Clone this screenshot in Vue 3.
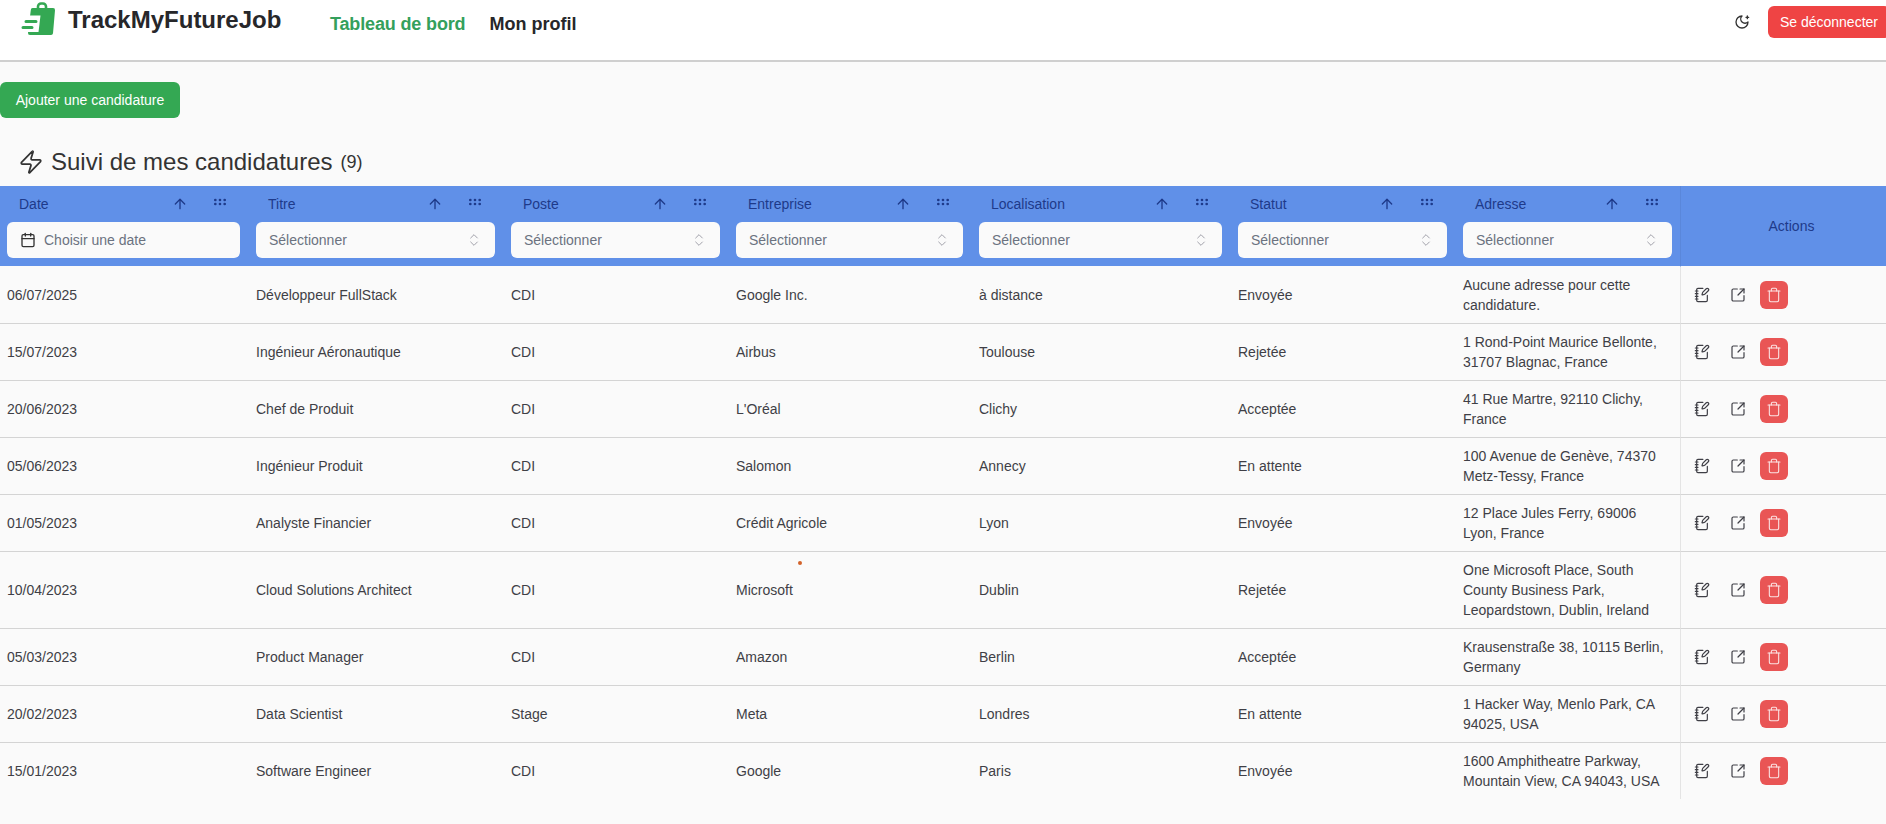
<script setup>
const columns = [
  { key: 'date', label: 'Date', width: 248, date: true },
  { key: 'titre', label: 'Titre', width: 255 },
  { key: 'poste', label: 'Poste', width: 225 },
  { key: 'entreprise', label: 'Entreprise', width: 243 },
  { key: 'localisation', label: 'Localisation', width: 259 },
  { key: 'statut', label: 'Statut', width: 225 },
  { key: 'adresse', label: 'Adresse', width: 225 },
];

const rows = [
  { date: '06/07/2025', titre: 'Développeur FullStack', poste: 'CDI', entreprise: 'Google Inc.', localisation: 'à distance', statut: 'Envoyée', adresse: 'Aucune adresse pour cette candidature.' },
  { date: '15/07/2023', titre: 'Ingénieur Aéronautique', poste: 'CDI', entreprise: 'Airbus', localisation: 'Toulouse', statut: 'Rejetée', adresse: '1 Rond-Point Maurice Bellonte, 31707 Blagnac, France' },
  { date: '20/06/2023', titre: 'Chef de Produit', poste: 'CDI', entreprise: "L'Oréal", localisation: 'Clichy', statut: 'Acceptée', adresse: '41 Rue Martre, 92110 Clichy, France' },
  { date: '05/06/2023', titre: 'Ingénieur Produit', poste: 'CDI', entreprise: 'Salomon', localisation: 'Annecy', statut: 'En attente', adresse: '100 Avenue de Genève, 74370 Metz-Tessy, France' },
  { date: '01/05/2023', titre: 'Analyste Financier', poste: 'CDI', entreprise: 'Crédit Agricole', localisation: 'Lyon', statut: 'Envoyée', adresse: '12 Place Jules Ferry, 69006 Lyon, France' },
  { date: '10/04/2023', titre: 'Cloud Solutions Architect', poste: 'CDI', entreprise: 'Microsoft', localisation: 'Dublin', statut: 'Rejetée', adresse: 'One Microsoft Place, South County Business Park, Leopardstown, Dublin, Ireland' },
  { date: '05/03/2023', titre: 'Product Manager', poste: 'CDI', entreprise: 'Amazon', localisation: 'Berlin', statut: 'Acceptée', adresse: 'Krausenstraße 38, 10115 Berlin, Germany' },
  { date: '20/02/2023', titre: 'Data Scientist', poste: 'Stage', entreprise: 'Meta', localisation: 'Londres', statut: 'En attente', adresse: '1 Hacker Way, Menlo Park, CA 94025, USA' },
  { date: '15/01/2023', titre: 'Software Engineer', poste: 'CDI', entreprise: 'Google', localisation: 'Paris', statut: 'Envoyée', adresse: '1600 Amphitheatre Parkway, Mountain View, CA 94043, USA' },
];
</script>

<template>
  <div class="page">
    <header class="navbar">
      <div class="brand">
        <svg class="logo" viewBox="0 0 36 34" fill="none">
          <path d="M18 7V4.5a3 3 0 0 1 3-3h2a3 3 0 0 1 3 3V7" stroke="#34a853" stroke-width="2.6" />
          <path d="M13 6h20a2 2 0 0 1 2 2.2L33 31.2a2 2 0 0 1-2 1.8H10a2 2 0 0 1-2-2.2L10.800 8a2 2 0 0 1 2.200-2z" fill="#34a853" />
          <path d="M6 13.500h14.500L18.500 30H4z" fill="#fff" />
          <path d="M6 19.500h10M3 25.500h9" stroke="#34a853" stroke-width="3" stroke-linecap="round" />
        </svg>
        <span class="brand-name">TrackMyFutureJob</span>
      </div>
      <nav class="links">
        <a class="link active">Tableau de bord</a>
        <a class="link">Mon profil</a>
      </nav>
      <div class="nav-right">
        <svg class="icon moon" viewBox="0 0 24 24">
          <path d="M12 3a6 6 0 0 0 9 9 9 9 0 1 1-9-9Z" />
          <path d="M20 3v4" />
          <path d="M22 5h-4" />
        </svg>
        <button class="logout">Se déconnecter</button>
      </div>
    </header>

    <main>
      <button class="add">Ajouter une candidature</button>

      <h1 class="title">
        <svg class="icon zap" viewBox="0 0 24 24">
          <path d="M4 14a1 1 0 0 1-.78-1.63l9.9-10.2a.5.5 0 0 1 .86.46l-1.92 6.02A1 1 0 0 0 13 10h7a1 1 0 0 1 .78 1.63l-9.9 10.2a.5.5 0 0 1-.86-.46l1.92-6.02A1 1 0 0 0 11 14z" />
        </svg>
        <span>Suivi de mes candidatures</span>
        <span class="count">(9)</span>
      </h1>

      <table>
        <colgroup>
          <col v-for="c in columns" :key="c.key" :style="{ width: c.width + 'px' }" />
          <col />
        </colgroup>
        <thead>
          <tr>
            <th v-for="c in columns" :key="c.key">
              <div class="head-row">
                <span class="head-label">{{ c.label }}</span>
                <svg class="icon head-icon" viewBox="0 0 24 24">
                  <path d="m5 12 7-7 7 7" />
                  <path d="M12 19V5" />
                </svg>
                <svg class="icon head-icon grip" viewBox="0 0 24 24">
                  <circle cx="5" cy="9" r="1" />
                  <circle cx="12" cy="9" r="1" />
                  <circle cx="19" cy="9" r="1" />
                  <circle cx="5" cy="15" r="1" />
                  <circle cx="12" cy="15" r="1" />
                  <circle cx="19" cy="15" r="1" />
                </svg>
              </div>
              <div v-if="c.date" class="filter">
                <svg class="icon cal" viewBox="0 0 24 24">
                  <path d="M8 2v4" />
                  <path d="M16 2v4" />
                  <rect width="18" height="18" x="3" y="4" rx="2" />
                  <path d="M3 10h18" />
                </svg>
                <span>Choisir une date</span>
              </div>
              <div v-else class="filter select">
                <span>Sélectionner</span>
                <svg class="icon chevrons" viewBox="0 0 24 24">
                  <path d="m7 15 5 5 5-5" />
                  <path d="m7 9 5-5 5 5" />
                </svg>
              </div>
            </th>
            <th class="actions-head">Actions</th>
          </tr>
        </thead>
        <tbody>
          <tr v-for="r in rows" :key="r.date + r.titre">
            <td v-for="c in columns" :key="c.key">{{ r[c.key] }}</td>
            <td class="actions">
              <div class="actions-row">
                <svg class="icon action" viewBox="0 0 24 24">
                  <path d="M13.4 2H6a2 2 0 0 0-2 2v16a2 2 0 0 0 2 2h12a2 2 0 0 0 2-2v-7.4" />
                  <path d="M2 6h4" />
                  <path d="M2 10h4" />
                  <path d="M2 14h4" />
                  <path d="M2 18h4" />
                  <path d="M21.378 5.626a1 1 0 1 0-3.004-3.004l-5.01 5.012a2 2 0 0 0-.506.854l-.837 2.87a.5.5 0 0 0 .62.62l2.87-.837a2 2 0 0 0 .854-.506z" />
                </svg>
                <svg class="icon action" viewBox="0 0 24 24">
                  <path d="M21 13v6a2 2 0 0 1-2 2H5a2 2 0 0 1-2-2V5a2 2 0 0 1 2-2h6" />
                  <path d="m21 3-9 9" />
                  <path d="M15 3h6v6" />
                </svg>
                <button class="trash">
                  <svg class="icon" viewBox="0 0 24 24">
                    <path d="M3 6h18" />
                    <path d="M19 6v14c0 1-1 2-2 2H7c-1 0-2-1-2-2V6" />
                    <path d="M8 6V4c0-1 1-2 2-2h4c1 0 2 1 2 2v2" />
                  </svg>
                </button>
              </div>
            </td>
          </tr>
        </tbody>
      </table>
    </main>

    <span class="cursor-dot"></span>
  </div>
</template>

<style>
html,
body {
  margin: 0;
  background: #fafafa;
  overflow: hidden;
}
</style>

<style scoped>
.page {
  position: relative;
  height: 824px;
  overflow: hidden;
  background: #fafafa;
  color: #333;
  font-family: "Liberation Sans", Arial, sans-serif;
  font-size: 14px;
  line-height: 20px;
}

.icon {
  width: 16px;
  height: 16px;
  flex: none;
  fill: none;
  stroke: currentColor;
  stroke-width: 2;
  stroke-linecap: round;
  stroke-linejoin: round;
}

.navbar {
  display: flex;
  height: 60px;
  background: #fff;
  border-bottom: 2px solid #cfcfcf;
  padding-left: 20px;
}

.brand {
  display: flex;
  align-items: flex-start;
  width: 310px;
}

.logo {
  width: 36px;
  height: 34px;
  margin-top: 2px;
  flex: none;
}

.brand-name {
  margin: 5px 0 0 12px;
  font-size: 24px;
  line-height: 30px;
  font-weight: 700;
  color: #27272a;
}

.links {
  display: flex;
  gap: 24px;
  padding-top: 12px;
}

.link {
  font-size: 18px;
  line-height: 24px;
  font-weight: 700;
  color: #27272a;
}

.link.active {
  color: #34a05c;
  letter-spacing: -0.15px;
}

.nav-right {
  display: flex;
  align-items: flex-start;
  gap: 18px;
  margin-left: auto;
  margin-right: -4px;
  padding-top: 6px;
}

.moon {
  margin-top: 8px;
  color: #333;
}

.logout {
  height: 32px;
  padding: 0 12px;
  border: 0;
  border-radius: 6px;
  background: #ef4444;
  color: #fff;
  font: inherit;
  white-space: nowrap;
}

.add {
  display: block;
  height: 36px;
  width: 180px;
  margin-top: 20px;
  padding: 0;
  border: 0;
  border-radius: 6px;
  background: #34a853;
  color: #fff;
  font: inherit;
}

.title {
  display: flex;
  align-items: center;
  gap: 7px;
  height: 32px;
  margin: 28px 0 8px;
  padding-left: 18px;
  font-size: 24px;
  line-height: 32px;
  font-weight: 400;
  color: #333;
}

.zap {
  width: 26px;
  height: 26px;
  stroke-width: 1.6;
}

.count {
  margin-left: 1px;
  font-size: 18px;
}

table {
  width: 100%;
  border-collapse: separate;
  border-spacing: 0;
  table-layout: fixed;
}

th {
  padding: 8px;
  border-bottom: 1px solid #fafafa;
  background: #6090e8;
  background-clip: padding-box;
  color: #1e3a8a;
  font-weight: 400;
  text-align: left;
  vertical-align: top;
}

th:first-child,
td:first-child {
  padding-left: 7px;
}

.head-row {
  display: flex;
  align-items: center;
  gap: 24px;
  height: 20px;
  margin-bottom: 8px;
  padding: 0 12px;
}

.head-label {
  flex: 1;
}

.grip {
  margin-bottom: 4px;
  fill: currentColor;
}

.filter {
  display: flex;
  align-items: center;
  gap: 8px;
  height: 36px;
  padding: 0 13px;
  border-radius: 6px;
  background: #fafafa;
  color: #6b7280;
}

.filter.select {
  justify-content: space-between;
}

.cal {
  color: #333;
}

.chevrons {
  color: #a1a1aa;
  stroke-width: 1.5;
}

th.actions-head {
  padding-left: 24px;
  vertical-align: middle;
  text-align: center;
  border-left: 1px solid #5a87da;
}

td {
  padding: 8px;
  border-bottom: 1px solid #d4d4d4;
  vertical-align: middle;
  color: #3f3f46;
}

tbody tr:last-child td {
  border-bottom: 0;
}

.actions {
  border-left: 1px solid #e4e4e4;
}

.actions-row {
  display: flex;
  align-items: center;
  gap: 20px;
  padding-left: 5px;
}

.action {
  color: #3f3f46;
  stroke-width: 1.8;
}

.trash {
  display: flex;
  align-items: center;
  justify-content: center;
  width: 28px;
  height: 28px;
  margin-left: -6px;
  padding: 0;
  border: 0;
  border-radius: 6px;
  background: #e95555;
  color: #fbe4e4;
}

.trash .icon {
  stroke-width: 1.6;
}

.cursor-dot {
  position: absolute;
  left: 798px;
  top: 561px;
  width: 4px;
  height: 4px;
  border-radius: 50%;
  background: #d2622a;
}
</style>
